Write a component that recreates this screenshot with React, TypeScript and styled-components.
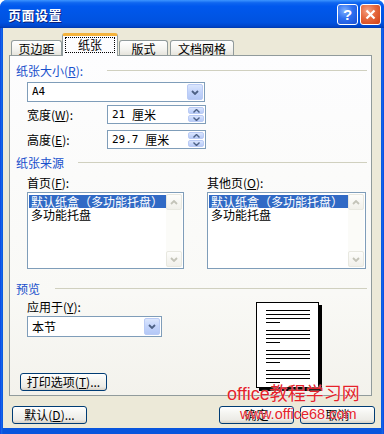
import React from "react";
import styled, { createGlobalStyle } from "styled-components";

const GlobalStyle = createGlobalStyle`
  html, body {
    margin: 0;
    padding: 0;
    background: #ffffff;
  }
  body {
    font-family: "Noto Sans CJK SC", "Liberation Sans", sans-serif;
    font-size: 12px;
    color: #000;
  }
  * { box-sizing: border-box; }
`;

const Window = styled.div`
  position: relative;
  width: 384px;
  height: 434px;
  display: flex;
  flex-direction: column;
  background: linear-gradient(to right, #0831d9 0, #166aee 1px, #0855dd 3px, #0855dd 381px, #166aee 383px, #0831d9 384px);
  border-radius: 7px 7px 0 0;
  overflow: hidden;
`;

const TitleBar = styled.div`
  height: 28px;
  flex: none;
  display: flex;
  align-items: center;
  padding: 0 3px 0 8px;
  background: linear-gradient(
    to bottom,
    #3d95ff 0%,
    #0f66f0 10%,
    #0058ee 22%,
    #0055e5 55%,
    #0052e0 80%,
    #0046cc 93%,
    #003ab0 100%
  );
`;

const Title = styled.div`
  flex: 1;
  color: #fff;
  font-weight: bold;
  font-size: 13px;
  letter-spacing: 0.5px;
  text-shadow: 1px 1px 0 #0a1f7a;
`;

const CapButton = styled.div<{ $close?: boolean }>`
  width: 21px;
  height: 21px;
  margin-left: 2px;
  border: 1px solid #fff;
  border-radius: 3px;
  display: flex;
  align-items: center;
  justify-content: center;
  color: #fff;
  font-family: "Liberation Sans", sans-serif;
  font-weight: bold;
  font-size: 15px;
  background: ${(p) =>
    p.$close
      ? "radial-gradient(circle at 35% 30%, #f6a184 0%, #e5683d 45%, #cf3f14 100%)"
      : "radial-gradient(circle at 35% 30%, #7fb1ff 0%, #2d6ff0 45%, #1a4fd2 100%)"};
`;

const Client = styled.div`
  flex: 1;
  margin: 0 3px 6px 3px;
  background: #ece9d8;
  padding-top: 5px;
  display: flex;
  flex-direction: column;
`;

const TabStrip = styled.div`
  height: 22px;
  display: flex;
  align-items: flex-end;
  padding-left: 8px;
  position: relative;
  z-index: 2;
`;

const Tab = styled.div<{ $w: number; $gap?: number; $active?: boolean }>`
  width: ${(p) => p.$w}px;
  margin-left: ${(p) => p.$gap ?? 0}px;
  height: ${(p) => (p.$active ? 23 : 15)}px;
  margin-bottom: ${(p) => (p.$active ? -1 : 0)}px;
  border: 1px solid #919b9c;
  border-bottom: none;
  border-top: ${(p) => (p.$active ? "3px solid #f4b33c" : "1px solid #919b9c")};
  border-radius: 3px 3px 0 0;
  background: ${(p) =>
    p.$active ? "#fcfcfe" : "linear-gradient(to bottom, #ffffff 0%, #f3f3ef 60%, #e6e4dc 100%)"};
  display: flex;
  align-items: center;
  justify-content: center;
  line-height: 12px;
  padding-top: ${(p) => (p.$active ? 0 : 1)}px;
`;

const FocusLabel = styled.div`
  width: 50px;
  height: 16px;
  border: 1px dotted #000;
  display: flex;
  align-items: center;
  justify-content: center;
  margin-top: -2px;
`;

const Panel = styled.div`
  margin-left: 6px;
  width: 363px;
  height: 341px;
  border: 1px solid #919b9c;
  background: linear-gradient(to bottom, #fdfdfe 0%, #f9f9f6 70%, #f3f2ec 100%);
  padding: 9px 4px 0 6px;
  display: flex;
  flex-direction: column;
  position: relative;
  z-index: 1;
`;

const GroupHeader = styled.div<{ $lineFrom: number; $mt?: number }>`
  height: 12px;
  margin-top: ${(p) => p.$mt ?? 0}px;
  display: grid;
  grid-template-columns: ${(p) => p.$lineFrom}px 1fr;
  align-items: center;
  color: #1850cc;
  line-height: 12px;
  white-space: nowrap;

  &::after {
    content: "";
    height: 1px;
    margin-top: -2px;
    background: #d0d0bf;
  }
`;

const Indent = styled.div`
  padding-left: 11px;
  display: flex;
  flex-direction: column;
`;

const FieldRow = styled.div<{ $mt: number }>`
  margin-top: ${(p) => p.$mt}px;
  height: 19px;
  display: flex;
  align-items: center;
`;

const FieldLabel = styled.div`
  width: 80px;
  line-height: 12px;
`;

const SubLabel = styled.div<{ $mt?: number; $ml?: number }>`
  margin-top: ${(p) => p.$mt ?? 0}px;
  margin-left: ${(p) => p.$ml ?? 0}px;
  height: 12px;
  line-height: 12px;
  white-space: nowrap;
`;

const Box = styled.div<{ $w: number; $h: number; $mt?: number; $ml?: number }>`
  width: ${(p) => p.$w}px;
  height: ${(p) => p.$h}px;
  margin-top: ${(p) => p.$mt ?? 0}px;
  margin-left: ${(p) => p.$ml ?? 0}px;
  border: 1px solid #7f9db9;
  background: #fff;
  display: flex;
  align-items: stretch;
  padding: 1px;
  flex: none;
`;

const BoxText = styled.div`
  flex: 1;
  display: flex;
  align-items: center;
  padding-left: 3px;
  line-height: 12px;
  font-family: "DejaVu Sans Mono", "Noto Sans CJK SC", monospace;
  font-size: 11px;
  white-space: pre;
`;

const BoxCjk = styled.span`
  font-family: "Noto Sans CJK SC", sans-serif;
  font-size: 12px;
`;

const DropButton = styled.div`
  width: 16px;
  border: 1px solid #bacbf5;
  border-radius: 2px;
  background: linear-gradient(to bottom, #dbe6fd 0%, #c3d4fb 50%, #b4c8f6 100%);
  display: flex;
  align-items: center;
  justify-content: center;
`;

const SpinCol = styled.div`
  width: 16px;
  display: flex;
  flex-direction: column;
  gap: 1px;
`;

const SpinHalf = styled.div`
  flex: 1;
  border: 1px solid #bacbf5;
  border-radius: 2px;
  background: linear-gradient(to bottom, #dbe6fd 0%, #c3d4fb 60%, #b8cbf6 100%);
  display: flex;
  align-items: center;
  justify-content: center;
`;

const SourceGrid = styled.div`
  margin-top: 8px;
  display: grid;
  grid-template-columns: 157px 159px;
  column-gap: 23px;
`;

const SourceCol = styled.div`
  display: flex;
  flex-direction: column;
`;

const ListBox = styled.div`
  margin-top: 3px;
  height: 77px;
  border: 1px solid #7f9db9;
  background: #fff;
  display: flex;
  padding: 2px 1px 1px 1px;
`;

const ListItems = styled.div`
  flex: 1;
  display: flex;
  flex-direction: column;
`;

const ListItem = styled.div<{ $selected?: boolean }>`
  height: 13px;
  line-height: 13px;
  padding-left: 2px;
  white-space: nowrap;
  background: ${(p) => (p.$selected ? "#316ac5" : "transparent")};
  color: ${(p) => (p.$selected ? "#fff" : "#000")};
`;

const ScrollBar = styled.div`
  width: 16px;
  margin-top: -1px;
  display: flex;
  flex-direction: column;
  justify-content: space-between;
  background: #fbfbf8;
`;

const ScrollBtn = styled.div`
  height: 16px;
  border: 1px solid #e8e8e0;
  border-radius: 2px;
  background: linear-gradient(to bottom, #fdfdfb, #f1f0ea);
  display: flex;
  align-items: center;
  justify-content: center;
`;

const PreviewRow = styled.div`
  height: 96px;
  display: flex;
  align-items: stretch;
`;

const PreviewLeft = styled.div`
  width: 146px;
  display: flex;
  flex-direction: column;
`;

const PushButton = styled.div<{ $w: number; $ml?: number }>`
  width: ${(p) => p.$w}px;
  height: 18px;
  margin-left: ${(p) => p.$ml ?? 0}px;
  border: 1px solid #003c74;
  border-radius: 3px;
  background: linear-gradient(to bottom, #ffffff 0%, #f4f4f0 40%, #ecebe6 80%, #d6d0c5 100%);
  display: flex;
  align-items: center;
  justify-content: center;
  line-height: 12px;
  white-space: nowrap;
  flex: none;
`;

const BottomButton = styled(PushButton)`
  margin-top: auto;
`;

const PageArt = styled.svg`
  margin-top: 7px;
  margin-left: 94px;
  flex: none;
`;

const Footer = styled.div`
  display: flex;
  align-items: flex-start;
  padding: 10px 6px 0 9px;
  gap: 6px;
`;

const Spacer = styled.div`
  flex: 1;
`;

const Watermark = styled.div`
  position: absolute;
  left: 227px;
  top: 384px;
  display: flex;
  flex-direction: column;
  color: #e4232b;
  pointer-events: none;
  z-index: 5;
`;

const MarkBig = styled.div`
  font-family: "Liberation Sans", "Noto Sans CJK SC", sans-serif;
  font-size: 18px;
  line-height: 20px;
  white-space: nowrap;
  text-shadow: 0 0 1px #fff;
`;

const MarkSmall = styled.div`
  margin-left: 13px;
  margin-top: 2px;
  font-family: "Liberation Sans", sans-serif;
  font-size: 14.5px;
  line-height: 16px;
  white-space: nowrap;
  text-shadow: 0 0 1px #fff;
`;

const Chevron = ({ up, color = "#4d6185", w = 8 }: { up?: boolean; color?: string; w?: number }) => (
  <svg width={w} height={5} viewBox="0 0 8 5">
    <path
      d={up ? "M1 4 L4 1 L7 4" : "M1 1 L4 4 L7 1"}
      fill="none"
      stroke={color}
      strokeWidth={1.8}
    />
  </svg>
);

const Combo = ({ w, h, mt, ml, children }: { w: number; h: number; mt?: number; ml?: number; children: React.ReactNode }) => (
  <Box $w={w} $h={h} $mt={mt} $ml={ml}>
    <BoxText>{children}</BoxText>
    <DropButton>
      <Chevron />
    </DropButton>
  </Box>
);

const Spinner = ({ children }: { children: React.ReactNode }) => (
  <Box $w={99} $h={19}>
    <BoxText>{children}</BoxText>
    <SpinCol>
      <SpinHalf>
        <svg width={7} height={4} viewBox="0 0 7 4">
          <path d="M0.5 3.5 L3.5 0.5 L6.5 3.5" fill="none" stroke="#4d6185" strokeWidth={1.4} />
        </svg>
      </SpinHalf>
      <SpinHalf>
        <svg width={7} height={4} viewBox="0 0 7 4">
          <path d="M0.5 0.5 L3.5 3.5 L6.5 0.5" fill="none" stroke="#4d6185" strokeWidth={1.4} />
        </svg>
      </SpinHalf>
    </SpinCol>
  </Box>
);

const SourceList = () => (
  <ListBox>
    <ListItems>
      <ListItem $selected>默认纸盒（多功能托盘）</ListItem>
      <ListItem>多功能托盘</ListItem>
    </ListItems>
    <ScrollBar>
      <ScrollBtn>
        <Chevron up color="#c3c3b8" w={8} />
      </ScrollBtn>
      <ScrollBtn>
        <Chevron color="#c3c3b8" w={8} />
      </ScrollBtn>
    </ScrollBar>
  </ListBox>
);

const lineRows = [0, 20, 40, 60];

const PagePreview = () => (
  <PageArt width={66} height={89} viewBox="0 0 66 89">
    <rect x={3} y={3} width={63} height={86} fill="#000" />
    <rect x={0.5} y={0.5} width={62} height={85} fill="#fff" stroke="#000" />
    {lineRows.map((top) => (
      <g key={top} stroke="#000" strokeWidth={1}>
        <line x1={10} x2={54} y1={8.5 + top} y2={8.5 + top} />
        <line x1={10} x2={54} y1={12.5 + top} y2={12.5 + top} />
        <line x1={10} x2={54} y1={16.5 + top} y2={16.5 + top} />
        <line x1={10} x2={24} y1={20.5 + top} y2={20.5 + top} />
      </g>
    ))}
  </PageArt>
);

const App: React.FC = () => {
  return (
    <>
      <GlobalStyle />
      <Window>
        <TitleBar>
          <Title>页面设置</Title>
          <CapButton>?</CapButton>
          <CapButton $close>
            <svg width={11} height={11} viewBox="0 0 11 11">
              <path d="M1.5 1.5 L9.5 9.5 M9.5 1.5 L1.5 9.5" stroke="#fff" strokeWidth={2.2} />
            </svg>
          </CapButton>
        </TitleBar>
        <Client>
          <TabStrip>
            <Tab $w={51}>页边距</Tab>
            <Tab $w={56} $active>
              <FocusLabel>纸张</FocusLabel>
            </Tab>
            <Tab $w={49} $gap={1}>版式</Tab>
            <Tab $w={64} $gap={2}>文档网格</Tab>
          </TabStrip>
          <Panel>
            <GroupHeader $lineFrom={91}>
              <span>
                纸张大小(<u>R</u>):
              </span>
            </GroupHeader>
            <Indent>
              <Combo w={178} h={20} mt={5}>
                A4
              </Combo>
              <FieldRow $mt={3}>
                <FieldLabel>
                  宽度(<u>W</u>):
                </FieldLabel>
                <Spinner>
                  21 <BoxCjk>厘米</BoxCjk>
                </Spinner>
              </FieldRow>
              <FieldRow $mt={6}>
                <FieldLabel>
                  高度(<u>E</u>):
                </FieldLabel>
                <Spinner>
                  29.7 <BoxCjk>厘米</BoxCjk>
                </Spinner>
              </FieldRow>
            </Indent>

            <GroupHeader $lineFrom={62} $mt={8}>
              <span>纸张来源</span>
            </GroupHeader>
            <Indent>
              <SourceGrid>
                <SourceCol>
                  <SubLabel>
                    首页(<u>F</u>):
                  </SubLabel>
                  <SourceList />
                </SourceCol>
                <SourceCol>
                  <SubLabel>
                    其他页(<u>O</u>):
                  </SubLabel>
                  <SourceList />
                </SourceCol>
              </SourceGrid>
            </Indent>

            <GroupHeader $lineFrom={39} $mt={14}>
              <span>预览</span>
            </GroupHeader>
            <PreviewRow>
              <PreviewLeft>
                <SubLabel $mt={6} $ml={11}>
                  应用于(<u>Y</u>):
                </SubLabel>
                <Combo w={135} h={21} mt={3} ml={11}>
                  <BoxCjk>本节</BoxCjk>
                </Combo>
                <BottomButton $w={87} $ml={4}>
                  打印选项(<u>T</u>)...
                </BottomButton>
              </PreviewLeft>
              <PagePreview />
            </PreviewRow>
          </Panel>
          <Footer>
            <PushButton $w={75}>
              默认(<u>D</u>)...
            </PushButton>
            <Spacer />
            <PushButton $w={75}>确定</PushButton>
            <PushButton $w={75}>取消</PushButton>
          </Footer>
        </Client>
        <Watermark>
          <MarkBig>office教程学习网</MarkBig>
          <MarkSmall>www.office68.com</MarkSmall>
        </Watermark>
      </Window>
    </>
  );
};

export default App;
